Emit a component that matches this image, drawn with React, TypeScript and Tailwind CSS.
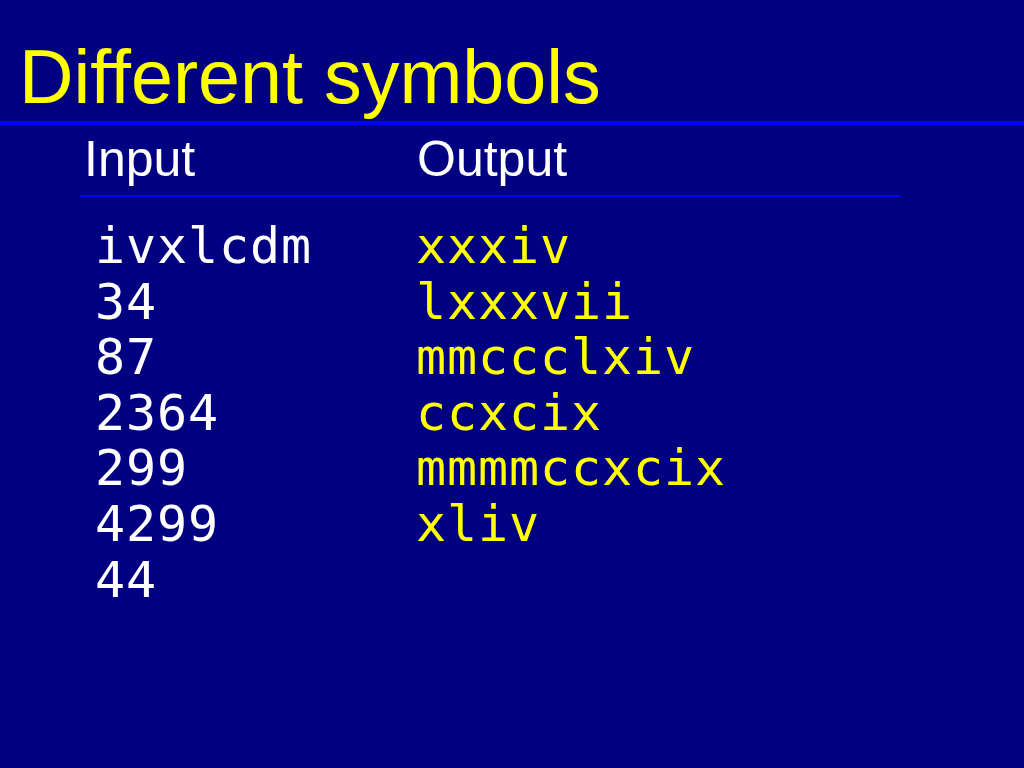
const inputs = ["ivxlcdm", "34", "87", "2364", "299", "4299", "44"];
const outputs = ["xxxiv", "lxxxvii", "mmccclxiv", "ccxcix", "mmmmccxcix", "xliv"];

export default function App() {
  return (
    <div className="h-[768px] w-[1024px] overflow-hidden bg-[#000080] font-['Liberation_Sans',Arial,sans-serif]">
      <h1 className="pl-[19px] pt-[39px] text-[75.5px] leading-[76px] text-[#ffff00]">
        Different symbols
      </h1>
      <div className="mt-[6px] h-[4px] w-full bg-[#0000ff]" />

      <div className="mt-[9px] flex text-[50px] leading-[50px] text-white">
        <div className="w-[417px] pl-[84px]">Input</div>
        <div>Output</div>
      </div>
      <div className="ml-[80px] mt-[11px] h-[2px] w-[820px] bg-[#0000ff]" />

      <div className="mt-[22px] flex font-['DejaVu_Sans_Mono',monospace] text-[50px] leading-[55.6px] tracking-[0.9px]">
        <div className="w-[416px] pl-[95px] text-white">
          {inputs.map((v) => (
            <div key={v}>{v}</div>
          ))}
        </div>
        <div className="text-[#ffff00]">
          {outputs.map((v) => (
            <div key={v}>{v}</div>
          ))}
        </div>
      </div>
    </div>
  );
}
